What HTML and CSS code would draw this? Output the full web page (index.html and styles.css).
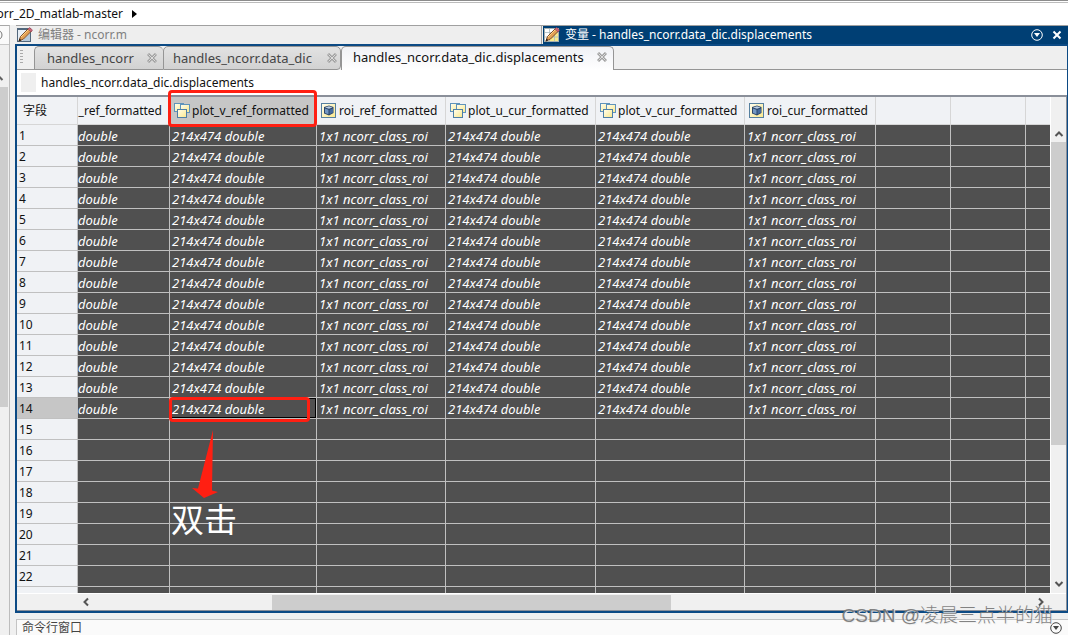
FILE: index.html
```html
<!DOCTYPE html>
<html lang="zh-CN">
<head>
<meta charset="utf-8">
<title>handles_ncorr.data_dic.displacements</title>
<link rel="stylesheet" href="styles.css">
</head>
<body>
<svg class="defs" aria-hidden="true">
  <defs>
    <linearGradient id="yellow" x1="0" y1="0" x2="1" y2="1"><stop offset="0" stop-color="#fffef0"/><stop offset="1" stop-color="#fbe88a"/></linearGradient>
    <symbol id="i-struct" viewBox="0 0 16 16">
      <rect x=".5" y=".5" width="9" height="8" fill="url(#yellow)" stroke="#5f93bb"/>
      <rect x="6.500" y="1.500" width="9" height="8" fill="url(#yellow)" stroke="#5f93bb"/>
      <rect x="3.500" y="6.500" width="9" height="8" fill="url(#yellow)" stroke="#4f7fa6"/>
    </symbol>
    <symbol id="i-object" viewBox="0 0 16 16">
      <rect x=".5" y=".5" width="14" height="14" fill="url(#yellow)" stroke="#56809f"/>
      <path d="M3 4 8 2.500l4.500 1.500v6L8 12.500l-5-2z" fill="#2c4668"/>
      <path d="M4 4.500l4-1.300 3.500 1.300L8 5.800z" fill="#b9cce2"/><path d="M4 5.500l3.500 1.300v4.500L4 10z" fill="#7397c4"/><path d="M8.500 6.800 12 5.500v4l-3.500 1.800z" fill="#456b9e"/>
    </symbol>
    <symbol id="i-pencil" viewBox="0 0 16 16">
      <path d="M2 14l1.500-4.500L11.500 1.500l3 2.500L6.500 12z" fill="#e3a054" stroke="#70401d" stroke-width=".9"/>
      <path d="M4 10l8-8" stroke="#ffd58e"/><path d="M11 2l1.500-1.500 3 2.500L14 5z" fill="#cc6577" stroke="#94475a" stroke-width=".6"/><path d="M1.500 14.500l1-3 2 1.700z" fill="#2e2218"/>
    </symbol>
    <symbol id="i-editor" viewBox="0 0 16 16">
      <rect x=".5" y="1.500" width="13" height="13" fill="#e8eff6" stroke="#52677c"/><path d="M1 2h12" stroke="#52677c" stroke-width="2"/><path d="M13 6v8H5z" fill="#b6c9da"/>
      <use href="#i-pencil"/>
    </symbol>
    <symbol id="i-variable" viewBox="0 0 16 16">
      <rect x=".5" y="1.500" width="14" height="13" fill="#fff" stroke="#a5afaf"/><path d="M5 6h9v8H5z" fill="#f8ea8c"/><path d="M1 5.500h13M1 10h13M5.500 2v12M10.500 2v12" stroke="#a9bbc2" stroke-width=".8"/>
      <use href="#i-pencil"/>
    </symbol>
    <symbol id="i-close" viewBox="0 0 10 10"><path d="M1 1l8 8m0-8l-8 8" stroke="#a0a0a0" stroke-width="3"/><path d="M1.500 1.500l7 7m0-7l-7 7" stroke="#dcdcdc"/></symbol>
    <symbol id="i-menu" viewBox="0 0 12 12"><circle cx="6" cy="6" r="5.300" fill="none" stroke="currentColor"/><path d="M3 4h6L6 8z" fill="currentColor"/></symbol>
    <symbol id="i-chevron" viewBox="0 0 10 10"><path d="M1.500 7 5 3.500 8.500 7" fill="none" stroke="currentColor" stroke-width="2"/></symbol>
  </defs>
</svg>

<nav class="pathbar"><span class="pathbar-text">orr_2D_matlab-master</span><svg class="caret" viewBox="0 0 5 8"><path d="M0 0l5 4-5 4z"/></svg></nav>

<div class="workspace">
  <aside class="side">
    <div class="side-head"><svg class="side-ring" viewBox="0 0 12 12"><circle cx="6" cy="6" r="5" fill="none" stroke="#777"/></svg></div>
    <svg class="side-up"><use href="#i-chevron"/></svg>
    <div class="side-thumb"></div>
  </aside>

  <div class="content">
    <div class="titles">
      <div class="title"><svg class="icon"><use href="#i-editor"/></svg><span>编辑器 - ncorr.m</span></div>
      <div class="title title-on"><svg class="icon"><use href="#i-variable"/></svg><span>变量 - handles_ncorr.data_dic.displacements</span>
        <button class="title-button push" aria-label="菜单"><svg class="round"><use href="#i-menu"/></svg></button>
        <button class="title-button" aria-label="关闭"><svg class="cross" viewBox="0 0 10 10"><path d="M1.500 1.500l7 7m0-7l-7 7" stroke="#fff" stroke-width="2"/></svg></button>
      </div>
    </div>

    <main class="panel">
      <div class="tabs">
        <div class="grip"></div>
        <div class="tab tab-a"><button class="tab-name">handles_ncorr</button><button class="tab-close" aria-label="关闭"><svg class="cross"><use href="#i-close"/></svg></button></div>
        <div class="tab tab-b"><button class="tab-name">handles_ncorr.data_dic</button><button class="tab-close" aria-label="关闭"><svg class="cross"><use href="#i-close"/></svg></button></div>
        <div class="tab tab-on"><button class="tab-name">handles_ncorr.data_dic.displacements</button><button class="tab-close" aria-label="关闭"><svg class="cross"><use href="#i-close"/></svg></button></div>
        <div class="tabs-rest"></div>
      </div>
      <div class="crumb"><span class="crumb-box"></span><span>handles_ncorr.data_dic.displacements</span></div>

      <div class="sheet">
        <div class="sheet-row">
          <div class="view">
            <table class="grid">
              <colgroup><col class="c-num"><col class="c-1"><col class="c-2"><col class="c-3"><col class="c-4"><col class="c-5"><col class="c-6"><col class="c-7"><col class="c-7"><col></colgroup>
              <thead><tr>
                <th class="corner">字段</th>
                <th><div class="head head-end">_ref_formatted</div></th>
                <th class="marked"><div class="head"><svg class="icon"><use href="#i-struct"/></svg>plot_v_ref_formatted</div></th>
                <th><div class="head"><svg class="icon"><use href="#i-object"/></svg>roi_ref_formatted</div></th>
                <th><div class="head"><svg class="icon"><use href="#i-struct"/></svg>plot_u_cur_formatted</div></th>
                <th><div class="head"><svg class="icon"><use href="#i-struct"/></svg>plot_v_cur_formatted</div></th>
                <th><div class="head"><svg class="icon"><use href="#i-object"/></svg>roi_cur_formatted</div></th>
                <th></th><th></th><th></th>
              </tr></thead>
              <tbody id="rows"></tbody>
            </table>
            <div class="note">
              <svg class="note-arrow" viewBox="0 0 26 68"><path d="M21 0 20 60.500 26 62 12 68 0 58 6 58.500z" fill="#ff1f12"/></svg>
              <span class="note-text">双击</span>
            </div>
          </div>
          <div class="vbar"><svg class="arrow"><use href="#i-chevron"/></svg><div class="vthumb"></div><svg class="arrow arrow-down"><use href="#i-chevron"/></svg></div>
        </div>
        <div class="hbar"><svg class="arrow arrow-left"><use href="#i-chevron"/></svg><div class="htrack"><div class="hthumb"></div></div><svg class="arrow arrow-right"><use href="#i-chevron"/></svg></div>
      </div>
    </main>

    <footer class="command"><span>命令行窗口</span><svg class="round"><use href="#i-menu"/></svg></footer>
  </div>
</div>
<div class="watermark">CSDN @凌晨三点半的猫</div>
<script src="rows.js"></script>
</body>
</html>
```

FILE: styles.css
```css
* { box-sizing: border-box; }
body {
  margin: 0;
  height: 100vh;
  display: flex;
  flex-direction: column;
  overflow: hidden;
  background: #f0f0f0;
  color: #111;
  font: 12px/20px "Noto Sans", "Noto Sans CJK SC", sans-serif;
}
button { border: 0; padding: 0; background: none; color: inherit; font: inherit; }
svg { display: block; flex: none; }
.defs { position: absolute; width: 0; height: 0; }
.icon { width: 16px; height: 16px; }
.round { width: 12px; height: 12px; }
.cross { width: 10px; height: 10px; }

.pathbar {
  flex: none;
  height: 25px;
  display: flex;
  align-items: center;
  gap: 9px;
  padding-top: 3px;
  background: linear-gradient(#8c8c8c 1px, #fff 1px, #fff 2px, #bcbcbc 2px, #bcbcbc 3px, #fff 3px);
}
.pathbar-text { width: 123px; display: flex; justify-content: flex-end; white-space: nowrap; }
.caret { width: 5px; height: 8px; }

.workspace { flex: 1; min-height: 0; display: flex; gap: 5px; }
.side { width: 10px; flex: none; border-right: 1px solid #bdbdbd; border-top: 1px solid #a8a8a8; overflow: hidden; }
.side-head { height: 19px; display: flex; align-items: center; justify-content: flex-end; padding-right: 6px; border-bottom: 1px solid #c8c8c8; background: #fafafa; }
.side-ring { width: 12px; height: 12px; }
.side-up { width: 10px; height: 10px; margin: 28px 0 4px -6px; color: #606060; }
.side-thumb { width: 8px; height: 320px; background: #cdcdcd; }

.content { flex: 1; min-width: 0; display: flex; flex-direction: column; }
.titles { flex: none; display: flex; height: 19px; margin-left: 1px; border-top: 1px solid #a0a0a0; }
.title { flex: 1; min-width: 0; display: flex; align-items: center; gap: 5px; padding-left: 1px; background: #eee; color: #808080; white-space: nowrap; border-right: 1px solid #a0a0a0; }
.title-on { background: #003f74; color: #fff; padding-right: 6px; border: 0; margin-left: 1px; flex: 0 0 50%; max-width: 525px; }
.title-button { flex: none; }
.push { margin-left: auto; margin-right: 4px; }

.panel { flex: 1; min-height: 0; display: flex; flex-direction: column; border: 2px solid #0c4a84; border-right-width: 1px; background: #fff; }
.tabs { flex: none; display: flex; height: 24px; background: #efefef; }
.grip { width: 17px; flex: none; border-bottom: 1px solid #999; background: repeating-linear-gradient(#aaa 0 1px, #efefef 1px 3px) 3px 4px / 3px 15px no-repeat; }
.tab { flex: none; display: flex; align-items: center; justify-content: space-between; padding: 0 6px 1px 12px; border: 1px solid #959595; border-radius: 5px 5px 0 0; background: linear-gradient(#e2e2e2, #d2d2d2); color: #444; font-size: 13px; white-space: nowrap; }
.tab-a { width: 129px; border-right: 0; }
.tab-b { width: 178px; padding-left: 9px; padding-right: 3px; border-bottom-right-radius: 4px; }
.tab-on { width: 273px; padding-left: 11px; padding-bottom: 3px; border-bottom: 0; background: linear-gradient(#f0f1f5, #fff); color: #111; }
.tabs-rest { flex: 1; border-bottom: 1px solid #959595; }
.crumb { flex: none; height: 25px; display: flex; align-items: center; gap: 5px; padding-left: 4px; }
.crumb-box { width: 15px; height: 19px; background: #efefef; }

.sheet { flex: 1; min-height: 0; display: flex; flex-direction: column; border: 1px solid #8a8f99; border-top-width: 2px; border-left: 0; background: #f0f0f0; }
.sheet-row { flex: 1; min-height: 0; display: flex; }
.view { flex: 1; min-width: 0; position: relative; clip-path: inset(-8px 0 0 0); background: #505050; }
.grid { width: 100%; table-layout: fixed; border-collapse: separate; border-spacing: 0; }
.c-num { width: 61px; } .c-1 { width: 92px; } .c-2 { width: 147px; } .c-3 { width: 129px; } .c-4 { width: 150px; } .c-5 { width: 149px; } .c-6 { width: 131px; } .c-7 { width: 75px; }
.grid th, .grid td { padding: 0; text-align: left; font-weight: normal; white-space: nowrap; border-right: 1px solid #c0c0c0; border-bottom: 1px solid #c0c0c0; }
.grid th:last-child, .grid td:last-child { border-right: 0; }
.grid thead th { height: 28px; background: #f0f2f5; border-color: #d6d6d6; }
.grid thead .corner { padding-left: 6px; }
.head { display: flex; align-items: center; gap: 2px; padding-left: 4px; }
.head-end { justify-content: flex-end; padding: 0 7px 0 0; }
.grid tbody th { height: 21px; padding: 2px 0 0 2px; line-height: 18px; background: #f0f2f5; }
.grid td { height: 21px; padding: 2px 0 0 2px; line-height: 18px; color: #fff; font-size: 13px; font-style: italic; background: #505050; }
.grid td.cut { padding-left: 0; }
.grid tbody .row-on { background: #c6c6c6; }
.grid thead .marked { position: relative; background: #c6c6c6; }
.marked::after, .picked::after { content: ""; position: absolute; border: 3px solid #ff1f12; border-radius: 4px; }
.marked::after { inset: -7px -1px -3px -2px; }
.grid .picked { position: relative; box-shadow: inset 0 0 0 1px #000; }
.picked::after { inset: -1px 6px -4px -1px; }

.note { position: absolute; left: 154px; top: 333px; }
.note-arrow { width: 26px; height: 68px; margin-left: 21px; }
.note-text { display: block; font-size: 33px; line-height: 44px; color: #fff; }

.vbar { width: 16px; flex: none; display: flex; flex-direction: column; align-items: center; padding: 32px 0 4px; color: #555; border-left: 1px solid #fff; }
.arrow { width: 10px; height: 10px; }
.vthumb { width: 15px; height: 303px; margin: 3px 0 auto; background: #cdcdcd; }
.arrow-down { transform: rotate(180deg); }
.arrow-left { transform: rotate(-90deg); }
.arrow-right { transform: rotate(90deg); }
.hbar { flex: none; height: 17px; display: flex; align-items: center; padding: 0 20px 0 64px; color: #555; border-top: 1px solid #fff; }
.htrack { flex: 1; padding: 0 365px 0 181px; }
.hthumb { height: 15px; background: #cdcdcd; }

.command { flex: none; height: 16px; margin: 6px 0 0 1px; display: flex; justify-content: space-between; align-items: center; padding: 1px 6px 0 5px; border: 1px solid #c4c4c4; border-width: 1px 0 0 1px; background: #fafafa; color: #444; white-space: nowrap; }
.watermark { position: absolute; right: 15px; bottom: 6px; font: 300 19px/26px "Liberation Sans", "Noto Sans CJK SC", sans-serif; color: #777; opacity: .9; text-shadow: 1px 1px 0 #eee; }
```

FILE: rows.js
```js
const FILLED = 14;
const TOTAL = 23;
const values = ["double", "214x474 double", "1x1 ncorr_class_roi", "214x474 double", "214x474 double", "1x1 ncorr_class_roi", "", "", ""];
const body = document.getElementById("rows");

for (let n = 1; n <= TOTAL; n++) {
  const row = body.insertRow();
  const label = document.createElement("th");
  label.textContent = n;
  if (n === FILLED) label.className = "row-on";
  row.append(label);
  values.forEach((value, i) => {
    const cell = row.insertCell();
    cell.textContent = n <= FILLED ? value : "";
    if (i === 0) cell.className = "cut";
    if (n === FILLED && i === 1) cell.className = "picked";
  });
}
```
